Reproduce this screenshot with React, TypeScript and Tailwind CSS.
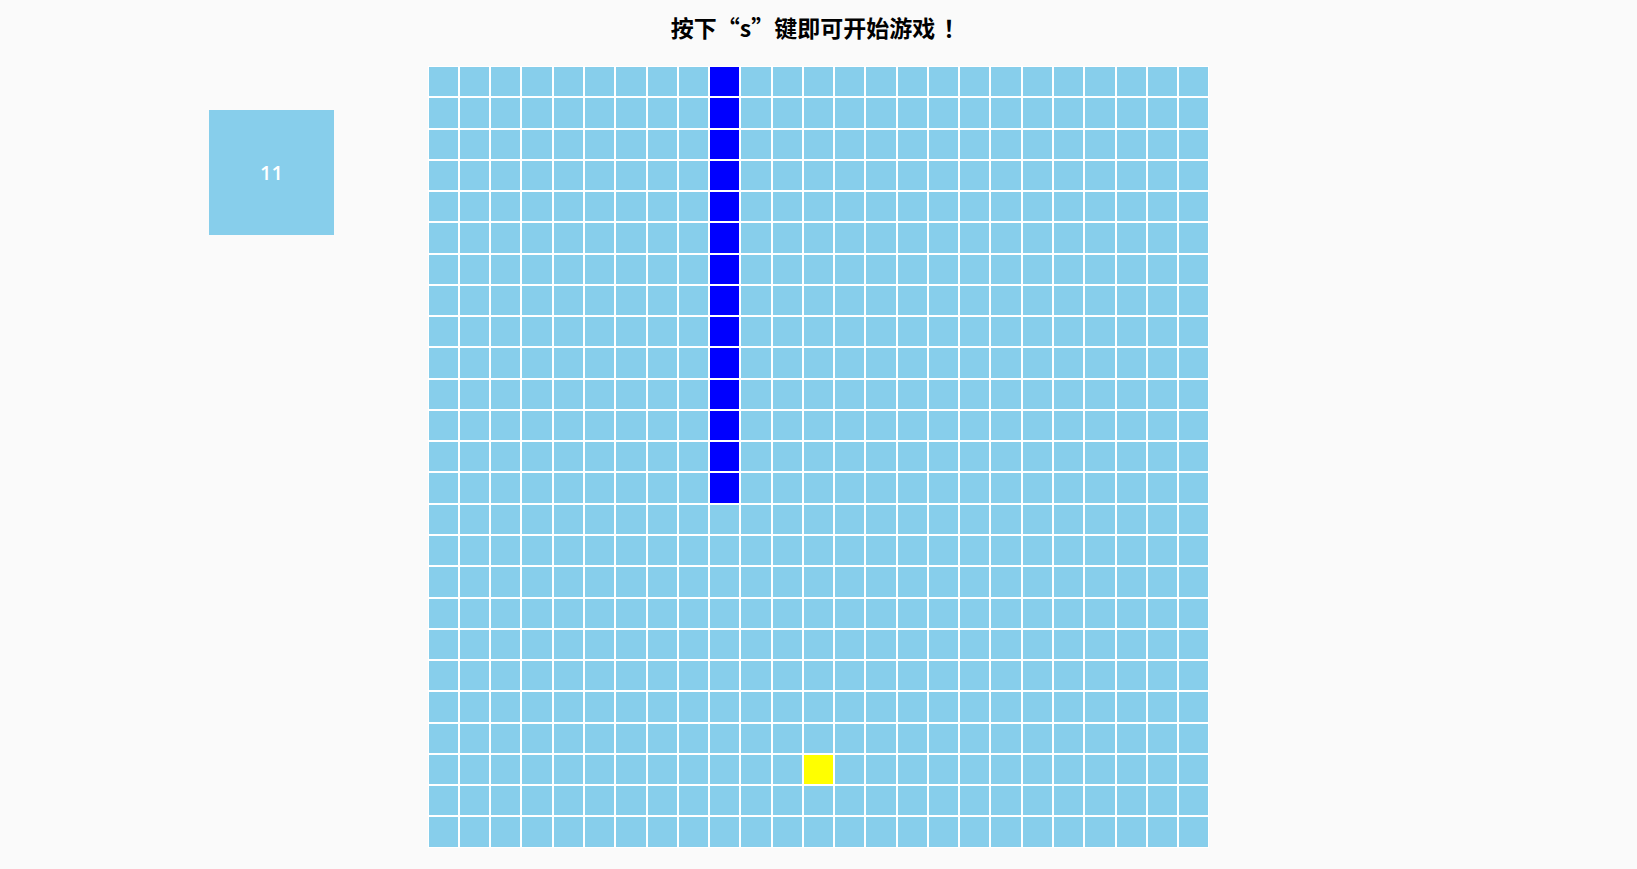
const SIZE = 25;
const snake = new Set(Array.from({ length: 14 }, (_, r) => `${r}-9`));
const food = '22-12';

function Cell({ id }: { id: string }) {
  let color = 'bg-[#87ceeb]';
  if (snake.has(id)) color = 'bg-[#0000ff]';
  else if (id === food) color = 'bg-[#ffff00]';
  return <div className={`h-[31.28px] w-[31.28px] border border-white ${color}`} />;
}

export default function App() {
  const cells: string[] = [];
  for (let r = 0; r < SIZE; r++) {
    for (let c = 0; c < SIZE; c++) cells.push(`${r}-${c}`);
  }

  return (
    <div className="min-h-screen bg-[#fafafa] font-['Noto_Sans','Noto_Sans_CJK_SC',sans-serif]">
      <h2 className="pt-[10px] text-center text-[23px] leading-[34px] font-bold text-black font-['Noto_Sans_CJK_SC',sans-serif]">
        按下“s”键即可开始游戏<span className="ml-[8px]">！</span>
      </h2>
      <div className="mt-[22px] grid grid-cols-[1fr_auto_1fr]">
        <div>
          <div className="mt-[44px] ml-[209px] flex h-[125px] w-[125px] items-center justify-center bg-[#87ceeb] text-[20px] font-semibold text-white font-['Open_Sans',sans-serif]">
            11
          </div>
        </div>
        <div className="grid grid-cols-[repeat(25,31.28px)]">
          {cells.map((id) => (
            <Cell key={id} id={id} />
          ))}
        </div>
        <div />
      </div>
    </div>
  );
}
